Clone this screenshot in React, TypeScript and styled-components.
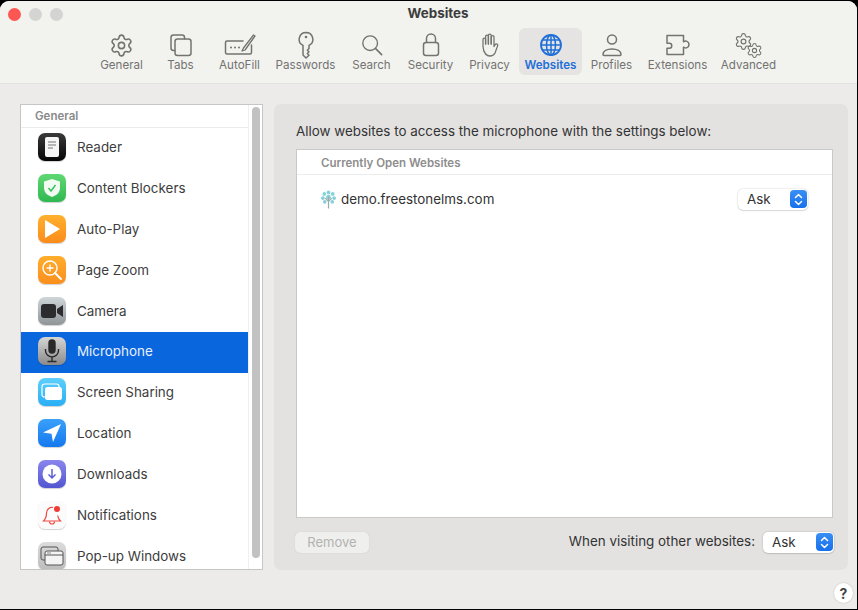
import React from 'react';
import styled, { createGlobalStyle } from 'styled-components';
import { Settings } from 'lucide-react';

const FONT = `Inter, "Liberation Sans", sans-serif`;

const GlobalStyle = createGlobalStyle`
  html, body {
    margin: 0;
    padding: 0;
    background: #000;
  }
  * {
    box-sizing: border-box;
  }
`;

const Window = styled.div`
  width: 857px;
  height: 608px;
  margin-top: 1px;
  display: flex;
  flex-direction: column;
  overflow: hidden;
  border-radius: 9px 9px 0 0;
  background: #ecebea;
  font-family: ${FONT};
  color: #3a3a3a;
`;

const Toolbar = styled.div`
  position: relative;
  height: 83px;
  flex: none;
  background: #f2f2ef;
  border-bottom: 1px solid #e2e2df;
`;

const TitleRow = styled.div`
  height: 27px;
  display: flex;
  justify-content: center;
  padding: 4px 0 0 19px;
  font-size: 13.4px;
  line-height: 16px;
  font-weight: 700;
  color: #3c3c3c;
`;

const Lights = styled.div`
  position: absolute;
  top: 7px;
  left: 8px;
  display: flex;
  gap: 8px;
`;

const Light = styled.span<{ $color: string }>`
  width: 13px;
  height: 13px;
  border-radius: 50%;
  background: ${({ $color }) => $color};
`;

const Tabs = styled.div`
  display: flex;
  padding-left: 92px;
`;

const Tab = styled.div<{ $active?: boolean; $width: number }>`
  width: ${({ $width }) => $width}px;
  height: 47px;
  padding-top: 4px;
  display: flex;
  flex-direction: column;
  align-items: center;
  border-radius: 6px;
  background: ${({ $active }) => ($active ? '#e5e4e2' : 'transparent')};
  color: ${({ $active }) => ($active ? '#1f6fd8' : '#737371')};
  font-size: 11.6px;
  font-weight: ${({ $active }) => ($active ? 600 : 400)};
`;

const TabIcon = styled.div`
  height: 26px;
  display: flex;
  align-items: center;
  justify-content: center;
`;

const TabLabel = styled.div`
  line-height: 14px;
  white-space: nowrap;
`;

const AdvancedGears = styled.div`
  position: relative;
  width: 29px;
  height: 24px;

  svg {
    position: absolute;
  }
  svg:first-child {
    left: 0;
    top: -1px;
  }
  svg:last-child {
    right: 0;
    bottom: -2px;
  }
`;

const Body = styled.div`
  display: flex;
  gap: 11px;
  height: 466px;
  margin: 20px 9px 0 20px;
  flex: none;
`;

const Sidebar = styled.div`
  position: relative;
  width: 243px;
  display: flex;
  background: #fff;
  border: 1px solid #c6c6c5;
  overflow: hidden;
`;

const List = styled.div`
  width: 227px;
  flex: none;
`;

const ListHeader = styled.div`
  height: 22.6px;
  padding: 1px 0 0 14px;
  font-size: 11.5px;
  line-height: 20px;
  font-weight: 600;
  color: #8a8a8a;
  border-bottom: 1px solid #ececec;
`;

const Row = styled.div<{ $selected?: boolean }>`
  height: 40.9px;
  display: flex;
  align-items: center;
  gap: 11px;
  padding: 0 0 2px 17px;
  font-size: 13.4px;
  color: ${({ $selected }) => ($selected ? '#e8f0fc' : '#3d3d3d')};
  background: ${({ $selected }) => ($selected ? '#0a66dc' : 'transparent')};
`;

const Tile = styled.div<{ $bg: string }>`
  width: 28px;
  height: 28px;
  flex: none;
  border-radius: 7px;
  display: flex;
  align-items: center;
  justify-content: center;
  background: ${({ $bg }) => $bg};
  box-shadow: 0 1px 1px rgba(0, 0, 0, 0.18);
`;

const Gutter = styled.div`
  flex: 1;
  padding: 2px 2px 11px 3px;
  border-left: 1px solid #f0f0f0;
`;

const Thumb = styled.div`
  height: 100%;
  border-radius: 4px;
  background: #c2c2c2;
`;

const Panel = styled.div`
  flex: 1;
  display: flex;
  flex-direction: column;
  padding: 0 14px 0 22px;
  background: #e3e2e1;
  border-radius: 7px;
`;

const Lead = styled.div`
  height: 45px;
  padding-top: 19px;
  font-size: 13.4px;
  line-height: 17px;
  color: #333;
  white-space: nowrap;
`;

const SiteBox = styled.div`
  height: 369px;
  margin-right: 1px;
  background: #fff;
  border: 1px solid #c9c9c8;
`;

const SiteHeader = styled.div`
  height: 25px;
  padding-left: 24px;
  font-size: 11.5px;
  line-height: 26px;
  font-weight: 600;
  color: #8d8d8d;
  border-bottom: 1px solid #ececec;
`;

const SiteRow = styled.div`
  height: 48px;
  display: flex;
  align-items: center;
  padding: 0 24px 0 24px;
  font-size: 13.4px;
  color: #333;
`;

const SiteName = styled.div`
  flex: 1;
  margin-left: 5px;
`;

const Select = styled.div<{ $width: number }>`
  width: ${({ $width }) => $width}px;
  height: 21px;
  display: flex;
  align-items: center;
  justify-content: space-between;
  padding: 0 1px 0 9px;
  border-radius: 5px;
  background: #fff;
  font-size: 13.4px;
  color: #333;
  box-shadow: 0 0 2px rgba(0, 0, 0, 0.22), 0 1px 1px rgba(0, 0, 0, 0.1);
`;

const Stepper = styled.span`
  width: 17px;
  height: 18px;
  display: flex;
  align-items: center;
  justify-content: center;
  border-radius: 4px;
  background: linear-gradient(#3a8ff5, #1670ea);
`;

const BottomRow = styled.div`
  height: 22px;
  margin: 13px 0 0 -1px;
  display: flex;
  align-items: center;
`;

const RemoveButton = styled.div`
  width: 74px;
  height: 21px;
  display: flex;
  align-items: center;
  justify-content: center;
  border-radius: 5px;
  background: #efefed;
  font-size: 13px;
  color: #b2b2b1;
  box-shadow: 0 0 1px rgba(0, 0, 0, 0.2);
`;

const BottomLabel = styled.div`
  margin-left: auto;
  margin-right: 8px;
  padding-bottom: 2px;
  font-size: 13.4px;
  color: #333;
  white-space: nowrap;
`;

const Footer = styled.div`
  flex: 1;
  display: flex;
  justify-content: flex-end;
  padding: 13px 4px 0 0;
`;

const HelpButton = styled.div`
  width: 19px;
  height: 20px;
  display: flex;
  align-items: center;
  justify-content: center;
  border-radius: 50%;
  background: #fff;
  font-size: 14px;
  font-weight: 700;
  color: #444;
  box-shadow: 0 0 2px rgba(0, 0, 0, 0.2);
`;

const line = {
  fill: 'none',
  stroke: 'currentColor',
  strokeWidth: 1.5,
  strokeLinecap: 'round' as const,
  strokeLinejoin: 'round' as const,
};

const TabsIcon = () => (
  <svg width="24" height="24" viewBox="0 0 24 24" {...line}>
    <path d="M6 17.5H4.5a2.5 2.5 0 0 1-2.5-2.5V4.5A2.5 2.5 0 0 1 4.5 2H13a2.5 2.5 0 0 1 2.5 2.500V6" />
    <rect x="6" y="6" width="16" height="16.500" rx="2.500" />
  </svg>
);

const AutoFillIcon = () => (
  <svg width="32" height="24" viewBox="0 0 32 24" {...line}>
    <path d="M19 8H3a1.500 1.500 0 0 0-1.500 1.500v10A1.500 1.500 0 0 0 3 21h23a1.500 1.500 0 0 0 1.500-1.500V12" />
    <path d="M18 18l3-1L31 3l-1.500-1L19.500 15z" strokeWidth="1.300" />
    <circle cx="7" cy="14.500" r="1" fill="currentColor" stroke="none" />
    <circle cx="11" cy="14.500" r="1" fill="currentColor" stroke="none" />
    <circle cx="15" cy="14.500" r="1" fill="currentColor" stroke="none" />
  </svg>
);

const KeyIcon = () => (
  <svg width="18" height="28" viewBox="0 0 18 28" {...line}>
    <path d="M9 1.500a6.800 6.800 0 0 0-3 12.900V24l3 3 3-2.800-1.700-1.700 1.700-1.700-1.700-1.600 1.700-1.700v-3.100A6.800 6.800 0 0 0 9 1.500z" />
    <circle cx="9" cy="6" r="1.300" fill="currentColor" stroke="none" />
  </svg>
);

const SearchIcon = () => (
  <svg width="22" height="22" viewBox="0 0 24 24" {...line}>
    <circle cx="10" cy="10" r="8" />
    <path d="M16 16l6.500 6.500" strokeWidth="1.800" />
  </svg>
);

const LockIcon = () => (
  <svg width="20" height="26" viewBox="0 0 20 26" {...line}>
    <rect x="2.500" y="10.500" width="15" height="13" rx="2.500" />
    <path d="M5.500 10.500V6.500a4.500 4.500 0 0 1 9 0v4" />
  </svg>
);

const HandIcon = () => (
  <svg width="18" height="24" viewBox="0 0 18 24" {...line} strokeWidth={1.3}>
    <path d="M4.600 21C3 19 2 16 2 13V6.500a1.300 1.300 0 0 1 2.600 0V11" />
    <path d="M4.600 11V3.500a1.400 1.400 0 0 1 2.800 0V11" />
    <path d="M7.400 11V2.500a1.400 1.400 0 0 1 2.800 0V11" />
    <path d="M10.200 11V4a1.400 1.400 0 0 1 2.800 0v9.500l1.200-2a1.400 1.400 0 0 1 2.400 1.400L14 20c-1 2-2.500 3-5 3-2 0-3.400-.8-4.400-2" />
  </svg>
);

const GlobeIcon = () => (
  <svg width="24" height="24" viewBox="0 0 24 24" fill="none" stroke="#1f6fd8" strokeWidth="1.500">
    <circle cx="12" cy="12" r="10" strokeWidth="1.800" />
    <ellipse cx="12" cy="12" rx="4.500" ry="10" />
    <path d="M12 2v20M2 12h20M3.500 7h17M3.500 17h17" />
  </svg>
);

const ProfileIcon = () => (
  <svg width="22" height="24" viewBox="0 0 22 24" {...line}>
    <circle cx="11" cy="6.500" r="4.500" />
    <path d="M2 21.500c0-3.500 4-5.500 9-5.500s9 2 9 5.500c0 .6-.4 1-1 1H3c-.6 0-1-.4-1-1z" />
  </svg>
);

const PuzzleIcon = () => (
  <svg width="26" height="24" viewBox="0 0 26 24" {...line}>
    <path d="M2 2.500h16.500v6.300c2-1.300 5.500-.8 5.500 2.700s-3.500 4-5.500 2.700v7.300H2v-6.300h2.500c3 0 3-5 0-5H2z" />
  </svg>
);

const AdvancedIcon = () => (
  <AdvancedGears>
    <Settings size={19} strokeWidth={1.500} />
    <Settings size={17} strokeWidth={1.500} />
  </AdvancedGears>
);

const ReaderGlyph = () => (
  <svg width="16" height="20" viewBox="0 0 16 20">
    <rect x="1" y="0" width="14" height="20" rx="2" fill="#f5f5f5" />
    <path d="M4 5h8M4 8h8M4 11h5" stroke="#777" strokeWidth="1.200" />
  </svg>
);

const ShieldGlyph = () => (
  <svg width="18" height="20" viewBox="0 0 18 20">
    <path d="M9 1l8 2.500V10c0 4.500-3.500 7.500-8 9-4.500-1.500-8-4.500-8-9V3.500z" fill="#f2fbf2" />
    <path d="M5.500 10l2.500 3 4.500-6" fill="none" stroke="#35c05a" strokeWidth="1.400" />
  </svg>
);

const PlayGlyph = () => (
  <svg width="18" height="20" viewBox="0 0 18 20">
    <path d="M2 1l15 9-15 9z" fill="#fff" />
  </svg>
);

const ZoomGlyph = () => (
  <svg width="22" height="22" viewBox="0 0 22 22" fill="none" stroke="#fff" strokeWidth="1.400">
    <circle cx="9" cy="9" r="7" />
    <path d="M9 5.500v7M5.500 9h7" />
    <path d="M14 14l6 6" strokeWidth="2" strokeLinecap="round" />
  </svg>
);

const CameraGlyph = () => (
  <svg width="22" height="14" viewBox="0 0 22 14">
    <rect x="0" y="0" width="15" height="14" rx="3" fill="#2c2c2e" />
    <path d="M16 5l6-4v12l-6-4z" fill="#2c2c2e" />
  </svg>
);

const MicGlyph = () => (
  <svg width="18" height="24" viewBox="0 0 18 24" fill="none" stroke="#2a2a2a" strokeWidth="1.400">
    <rect x="6" y="1" width="6" height="13" rx="3" fill="#2a2a2a" />
    <path d="M2.500 10v1.500a6.500 6.500 0 0 0 13 0V10M9 18v4M4.500 22.500h9" />
  </svg>
);

const ScreenGlyph = () => (
  <svg width="22" height="20" viewBox="0 0 22 20">
    <rect x="1" y="2" width="17" height="13" rx="2.500" fill="none" stroke="#fff" strokeWidth="1.200" />
    <rect x="4" y="5" width="17" height="13" rx="2.500" fill="#fff" />
  </svg>
);

const LocationGlyph = () => (
  <svg width="20" height="20" viewBox="0 0 20 20">
    <path d="M19 1L1 9.500l8.500 1.200L11 19z" fill="#fff" />
  </svg>
);

const DownloadGlyph = () => (
  <svg width="20" height="20" viewBox="0 0 20 20">
    <circle cx="10" cy="10" r="9.500" fill="#fff" />
    <path d="M10 5v9M6.500 10.500L10 14l3.500-3.500" fill="none" stroke="#5b5fd6" strokeWidth="1.500" />
  </svg>
);

const BellGlyph = () => (
  <svg width="20" height="21" viewBox="0 0 20 21" fill="none" stroke="#ef4a42" strokeWidth="1.200">
    <path d="M11 2.500A5.500 5.500 0 0 0 4.500 8c0 3.500-.8 6-3 8h17c-1.800-1.800-2.700-3.500-2.800-5.500" />
    <path d="M7.500 16.500a2.500 2.500 0 0 0 5 0" />
    <circle cx="15" cy="4" r="3" fill="#ef3b33" stroke="none" />
  </svg>
);

const PopupGlyph = () => (
  <svg width="24" height="20" viewBox="0 0 24 20" fill="none" stroke="#555" strokeWidth="1">
    <rect x="1" y="1" width="17" height="13" rx="2" />
    <rect x="5" y="5" width="18" height="14" rx="2" fill="#f4f4f4" />
    <path d="M5 9h18" />
    <path d="M7 7h4" stroke="#888" />
  </svg>
);

const StepperArrows = () => (
  <svg width="9" height="13" viewBox="0 0 9 13" fill="none" stroke="#fff" strokeWidth="1.500" strokeLinecap="round" strokeLinejoin="round">
    <path d="M1.500 4.500L4.500 1.500l3 3M1.500 8.500l3 3 3-3" />
  </svg>
);

const TreeIcon = () => (
  <svg width="15" height="19" viewBox="0 0 16 20">
    <g fill="#84d2d8">
      <circle cx="8" cy="2.500" r="2" />
      <circle cx="3.500" cy="4" r="2" />
      <circle cx="12.500" cy="4" r="2" />
      <circle cx="2" cy="8.500" r="2" />
      <circle cx="14" cy="8.500" r="2" />
      <circle cx="4" cy="12.500" r="2" />
      <circle cx="12" cy="12.500" r="2" />
      <circle cx="8" cy="7.500" r="2.500" />
    </g>
    <path d="M8 7v12.500M8 12L4.500 8.500M8 12l3.500-3.500" stroke="#9aa9ad" strokeWidth="1.300" fill="none" />
  </svg>
);

const AskSelect = ({ width }: { width: number }) => (
  <Select $width={width}>
    Ask
    <Stepper>
      <StepperArrows />
    </Stepper>
  </Select>
);

const tabs = [
  { label: 'General', width: 59, icon: <Settings size={25} strokeWidth={1.500} /> },
  { label: 'Tabs', width: 59, icon: <TabsIcon /> },
  { label: 'AutoFill', width: 59, icon: <AutoFillIcon /> },
  { label: 'Passwords', width: 73, icon: <KeyIcon /> },
  { label: 'Search', width: 59, icon: <SearchIcon /> },
  { label: 'Security', width: 59, icon: <LockIcon /> },
  { label: 'Privacy', width: 59, icon: <HandIcon /> },
  { label: 'Websites', width: 63, icon: <GlobeIcon />, active: true },
  { label: 'Profiles', width: 59, icon: <ProfileIcon /> },
  { label: 'Extensions', width: 73, icon: <PuzzleIcon /> },
  { label: 'Advanced', width: 69, icon: <AdvancedIcon /> },
];

const rows = [
  { label: 'Reader', bg: 'linear-gradient(#3a3a3a, #050505)', glyph: <ReaderGlyph /> },
  { label: 'Content Blockers', bg: 'linear-gradient(#5fd873, #2fb851)', glyph: <ShieldGlyph /> },
  { label: 'Auto-Play', bg: 'linear-gradient(#ffb02e, #fb8c1c)', glyph: <PlayGlyph /> },
  { label: 'Page Zoom', bg: 'linear-gradient(#ffad2c, #fb8f1e)', glyph: <ZoomGlyph /> },
  { label: 'Camera', bg: 'linear-gradient(#cfd6da, #8f9497)', glyph: <CameraGlyph /> },
  { label: 'Microphone', bg: 'linear-gradient(#d6d6d6, #8a8a8a)', glyph: <MicGlyph />, selected: true },
  { label: 'Screen Sharing', bg: 'linear-gradient(#5ed0fb, #29aef5)', glyph: <ScreenGlyph /> },
  { label: 'Location', bg: 'linear-gradient(#3aa0fb, #1478ee)', glyph: <LocationGlyph /> },
  { label: 'Downloads', bg: 'linear-gradient(#8a86ee, #5256cf)', glyph: <DownloadGlyph /> },
  { label: 'Notifications', bg: '#fbfbfb', glyph: <BellGlyph /> },
  { label: 'Pop-up Windows', bg: 'linear-gradient(#dcdcdc, #bcbcbc)', glyph: <PopupGlyph /> },
];

export default function App() {
  return (
    <Window>
      <GlobalStyle />
      <Toolbar>
        <Lights>
          <Light $color="#fc5753" />
          <Light $color="#d4d4d2" />
          <Light $color="#d4d4d2" />
        </Lights>
        <TitleRow>Websites</TitleRow>
        <Tabs>
          {tabs.map((tab) => (
            <Tab key={tab.label} $width={tab.width} $active={tab.active}>
              <TabIcon>{tab.icon}</TabIcon>
              <TabLabel>{tab.label}</TabLabel>
            </Tab>
          ))}
        </Tabs>
      </Toolbar>
      <Body>
        <Sidebar>
          <List>
            <ListHeader>General</ListHeader>
            {rows.map((row) => (
              <Row key={row.label} $selected={row.selected}>
                <Tile $bg={row.bg}>{row.glyph}</Tile>
                {row.label}
              </Row>
            ))}
          </List>
          <Gutter>
            <Thumb />
          </Gutter>
        </Sidebar>
        <Panel>
          <Lead>Allow websites to access the microphone with the settings below:</Lead>
          <SiteBox>
            <SiteHeader>Currently Open Websites</SiteHeader>
            <SiteRow>
              <TreeIcon />
              <SiteName>demo.freestonelms.com</SiteName>
              <AskSelect width={70} />
            </SiteRow>
          </SiteBox>
          <BottomRow>
            <RemoveButton>Remove</RemoveButton>
            <BottomLabel>When visiting other websites:</BottomLabel>
            <AskSelect width={71} />
          </BottomRow>
        </Panel>
      </Body>
      <Footer>
        <HelpButton>?</HelpButton>
      </Footer>
    </Window>
  );
}
